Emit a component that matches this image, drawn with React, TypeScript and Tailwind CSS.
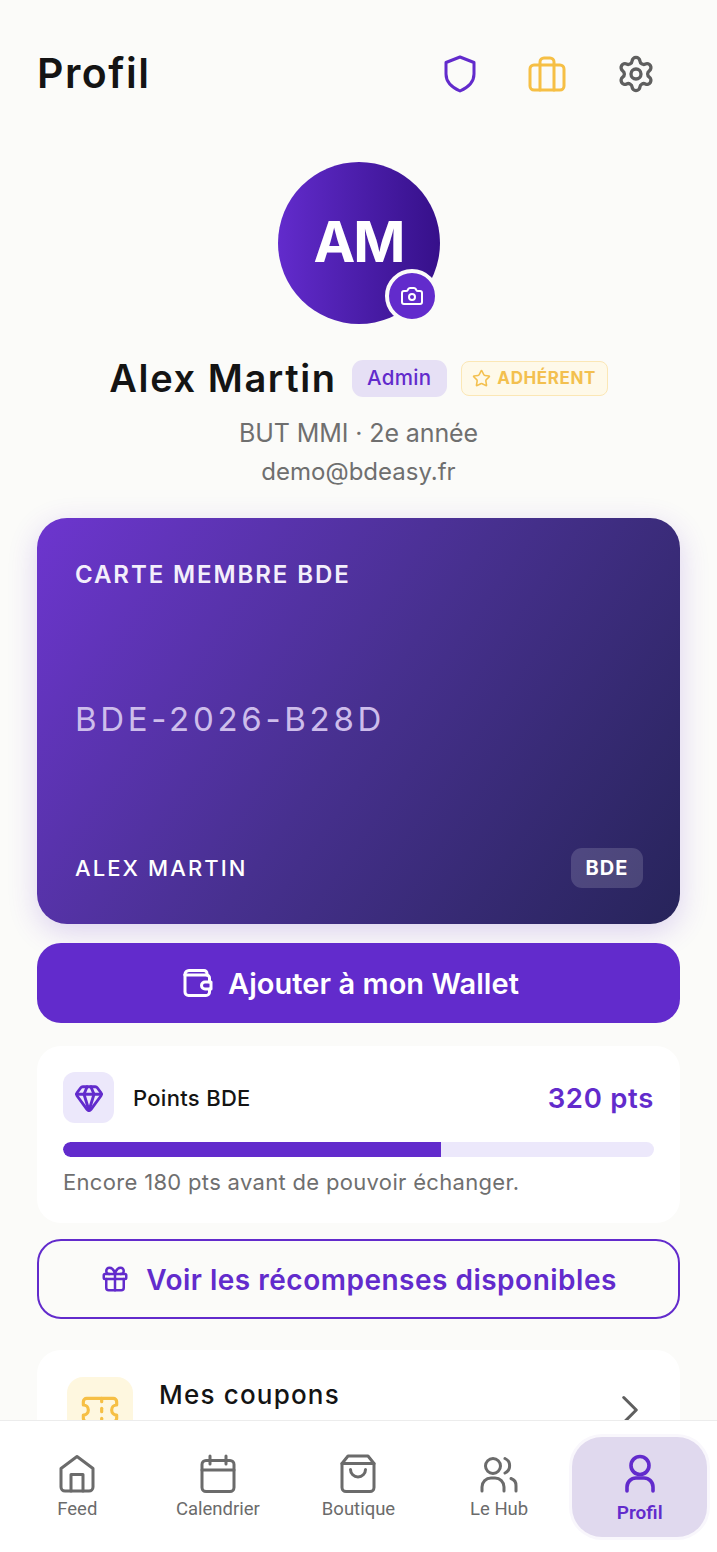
import React from "react";
import { Settings, Camera, Star, Gem, Gift, Ticket, ChevronRight } from "lucide-react";

const head = "font-['Inter',sans-serif]";
const body = "font-['Inter',sans-serif]";

type IconProps = { className?: string };
const Svg = ({ w, h, className, children }: { w: number; h: number; className?: string; children: React.ReactNode }) => (
  <svg width={w} height={h} viewBox={`0 0 ${w} ${h}`} fill="none" stroke="currentColor" strokeWidth={3} strokeLinecap="round" strokeLinejoin="round" className={className}>
    {children}
  </svg>
);

const ShieldIcon = ({ className }: IconProps) => (
  <Svg w={32} h={38} className={className}>
    <path d="M16 2 L30 7.5 V19 C30 27 24 32.5 16 36 C8 32.5 2 27 2 19 V7.5 Z" />
  </Svg>
);
const CaseIcon = ({ className }: IconProps) => (
  <Svg w={38} h={36} className={className}>
    <rect x="2" y="9" width="34" height="25" rx="4" />
    <path d="M12 34 V6 a4 4 0 0 1 4-4 H22 a4 4 0 0 1 4 4 V34" />
  </Svg>
);
const WalletIcon = ({ className }: IconProps) => (
  <Svg w={30} h={30} className={className}>
    <path d="M2 6.5 V24 a3.5 3.5 0 0 0 3.5 3.5 H23 a3.5 3.5 0 0 0 3.5-3.5 V21" />
    <path d="M26.5 14 V10 a3 3 0 0 0-3-3 H2" />
    <path d="M2 6.5 a4 4 0 0 1 4-4 H21 a3 3 0 0 1 3 3 V7" />
    <path d="M28 14 H22 a3.5 3.5 0 0 0 0 7 H28 Z" />
  </Svg>
);
const HomeIcon = ({ className }: IconProps) => (
  <Svg w={38} h={40} className={className}>
    <path d="M19 2.5 L35 14.5 V33 a4 4 0 0 1-4 4 H7 a4 4 0 0 1-4-4 V14.5 Z" />
    <path d="M13 37 V20.5 H25 V37" />
  </Svg>
);
const CalIcon = ({ className }: IconProps) => (
  <Svg w={38} h={40} className={className}>
    <rect x="3" y="6.5" width="32" height="31" rx="4" />
    <path d="M11 2 V10 M27 2 V10 M3 16 H35" />
  </Svg>
);
const BagIcon = ({ className }: IconProps) => (
  <Svg w={38} h={40} className={className}>
    <path d="M9 2 H29 L35 9.5 V33.5 a4 4 0 0 1-4 4 H7 a4 4 0 0 1-4-4 V9.5 Z" />
    <path d="M3 9.5 H35" />
    <path d="M11.5 15.5 a7.5 7.5 0 0 0 15 0" />
  </Svg>
);
const UsersIcon = ({ className }: IconProps) => (
  <Svg w={38} h={40} className={className}>
    <g transform="translate(0 2)">
      <circle cx="13" cy="10" r="7.5" />
      <path d="M25 2.5 a8 8 0 0 1 0 14.5" />
      <path d="M2 35 V31 a9 9 0 0 1 9-9 H15 a9 9 0 0 1 9 9 V35" />
      <path d="M31 22.5 a7.5 7.5 0 0 1 5 7.5 V35" />
    </g>
  </Svg>
);
const UserIcon = ({ className }: IconProps) => (
  <svg width={34} height={40} viewBox="0 0 34 40" fill="none" stroke="currentColor" strokeWidth={3.6} strokeLinecap="round" strokeLinejoin="round" className={className}>
    <circle cx="17" cy="11.5" r="9" />
    <path d="M4 37 V33 a9 9 0 0 1 9-9 H21 a9 9 0 0 1 9 9 V37" />
  </svg>
);

function Tab({ icon: Icon, label, active }: { icon: any; label: string; active?: boolean }) {
  if (active) {
    return (
      <div className="flex h-[100px] w-[135px] flex-col items-center rounded-[30px] bg-[#e0d9ee] pt-[17px] shadow-[0_0_0_3px_#f9f7fc]">
        <Icon className="text-[#622bcc]" />
        <span className="mt-[8px] font-['Roboto',sans-serif] text-[19px] leading-[22px] font-semibold text-[#622bcc]">{label}</span>
      </div>
    );
  }
  return (
    <div className="flex flex-col items-center pt-[17px]">
      <Icon className="text-[#6b6b6b]" />
      <span className="mt-[4px] font-['Roboto',sans-serif] text-[18.5px] leading-[22px] font-normal text-[#6b6b6b]">{label}</span>
    </div>
  );
}

export default function App() {
  return (
    <div className={`flex h-[1552px] w-[717px] flex-col overflow-hidden bg-[#fbfbf9] ${body}`}>
      <main className="min-h-0 flex-1 overflow-hidden px-[37px]">
        <header className="flex h-[147px] items-center">
          <h1 className={`flex-1 text-[41px] leading-none font-semibold tracking-[1.5px] text-[#141414] ${head}`}>Profil</h1>
          <div className="mr-[24px] flex items-center">
            <ShieldIcon className="text-[#622bcc]" />
            <CaseIcon className="ml-[52px] text-[#f6bf45]" />
            <Settings className="ml-[50px] h-[40px] w-[40px] text-[#5f5f5f]" strokeWidth={2} />
          </div>
        </header>

        <section className="flex flex-col items-center">
          <div className="relative mt-[15px] flex h-[162px] w-[162px] items-center justify-center rounded-full bg-linear-to-r from-[#622bcc] to-[#36108a] pb-[2px]">
            <span className="text-[56px] leading-none font-bold tracking-[-2px] text-white">AM</span>
            <div className="absolute right-[1px] bottom-[1px] flex h-[54px] w-[54px] items-center justify-center rounded-full border-[4px] border-[#fbfbf9] bg-[#622bcc]">
              <Camera className="h-[24px] w-[24px] text-white" strokeWidth={2} />
            </div>
          </div>
          <div className="mt-[30px] flex items-center">
            <span className={`text-[38px] leading-[48px] font-semibold tracking-[1.6px] text-[#141414] ${head}`}>Alex Martin</span>
            <span className="ml-[15px] flex h-[37px] w-[95px] items-center justify-center rounded-[11px] bg-[#e6e0f5] text-[20.5px] font-medium tracking-[0.3px] text-[#622bcc]">Admin</span>
            <span className="ml-[14px] flex h-[35px] w-[147px] items-center justify-center gap-[6px] rounded-[8px] border border-[#fbe7b5] bg-[#fef9e9] text-[17px] font-bold tracking-[0.6px] text-[#f3c04f]">
              <Star className="h-[19px] w-[19px]" strokeWidth={2} />
              <span className="pt-[2px]">ADHÉRENT</span>
            </span>
          </div>
          <p className="mt-[15px] text-[25px] leading-[32px] tracking-[-0.1px] text-[#6f6f6f]">BUT MMI · 2e année</p>
          <p className="mt-[7px] text-[24px] leading-[32px] text-[#6f6f6f]">demo@bdeasy.fr</p>
        </section>

        <section className="mt-[30px] flex h-[406px] flex-col rounded-[30px] bg-linear-125 from-[#6d35cf] via-[#47308f] to-[#27245a] pt-[42px] pr-[37px] pb-[36px] pl-[38px] shadow-[0_8px_30px_rgba(98,43,204,0.2)]">
          <div className={`text-[24px] leading-[30px] font-semibold tracking-[1.9px] text-[#f3effb] ${head}`}>CARTE MEMBRE BDE</div>
          <div className="flex flex-1 items-center pt-[1px]">
            <span className={`text-[33px] leading-none font-normal tracking-[3.7px] text-[#cdbdeb] ${head}`}>BDE-2026-B28D</span>
          </div>
          <div className="flex items-center justify-between">
            <span className="text-[22px] leading-[28px] font-medium tracking-[2.1px] text-white">ALEX MARTIN</span>
            <span className="flex h-[40px] w-[72px] items-center justify-center rounded-[11px] bg-[rgba(255,255,255,0.15)] text-[20px] font-bold tracking-[1px] text-white">BDE</span>
          </div>
        </section>

        <button className="mt-[19px] flex h-[80px] w-full items-center justify-center gap-[15px] rounded-[24px] bg-[#622bcc] pr-[15px] text-white">
          <WalletIcon />
          <span className={`text-[29px] leading-none font-semibold tracking-[0.05px] ${head}`}>Ajouter à mon Wallet</span>
        </button>

        <section className="mt-[23px] h-[177px] rounded-[24px] bg-white px-[26px] pt-[26px]">
          <div className="flex items-center">
            <div className="flex h-[51px] w-[51px] items-center justify-center rounded-[12px] bg-[#ece8fb]">
              <Gem className="h-[30px] w-[30px] text-[#622bcc]" strokeWidth={2.3} />
            </div>
            <span className={`ml-[19px] flex-1 pt-[1px] text-[22px] font-medium tracking-[0.3px] text-[#141414] ${head}`}>Points BDE</span>
            <span className={`pt-[3px] text-[27.5px] font-semibold tracking-[0.7px] text-[#622bcc] ${head}`}>320 pts</span>
          </div>
          <div className="mt-[19px] h-[15px] overflow-hidden rounded-full bg-[#ece8fb]">
            <div className="h-full rounded-l-full bg-[#622bcc]" style={{ width: "64%" }} />
          </div>
          <p className="mt-[10px] text-[22px] leading-[30px] tracking-[0.32px] text-[#6f6f6f]">Encore 180 pts avant de pouvoir échanger.</p>
        </section>

        <button className="mt-[16px] flex h-[80px] w-full items-center justify-center gap-[16px] rounded-[24px] border-2 border-[#622bcc] text-[#622bcc]">
          <Gift className="h-[30px] w-[30px]" strokeWidth={2} />
          <span className={`pt-[2px] text-[28px] leading-none font-semibold tracking-[0.5px] ${head}`}>Voir les récompenses disponibles</span>
        </button>

        <section className="mt-[31px] flex h-[120px] items-start rounded-[24px] bg-white px-[30px] pt-[27px]">
          <div className="flex h-[66px] w-[66px] items-center justify-center rounded-[16px] bg-[#fef7df]">
            <Ticket className="h-[40px] w-[40px] text-[#f6bf45]" strokeWidth={1.9} />
          </div>
          <span className={`ml-[26px] flex-1 text-[26px] leading-[36px] font-medium tracking-[1.2px] text-[#141414] ${head}`}>Mes coupons</span>
          <ChevronRight className="mt-[8px] mr-[-5px] h-[50px] w-[50px] text-[#5f5f5f]" strokeWidth={1.45} />
        </section>
      </main>

      <nav className="grid h-[132px] shrink-0 grid-cols-5 justify-items-center border-t border-[#ececec] bg-white px-[7px] pt-[16px]">
        <Tab icon={HomeIcon} label="Feed" />
        <Tab icon={CalIcon} label="Calendrier" />
        <Tab icon={BagIcon} label="Boutique" />
        <Tab icon={UsersIcon} label="Le Hub" />
        <Tab icon={UserIcon} label="Profil" active />
      </nav>
    </div>
  );
}
